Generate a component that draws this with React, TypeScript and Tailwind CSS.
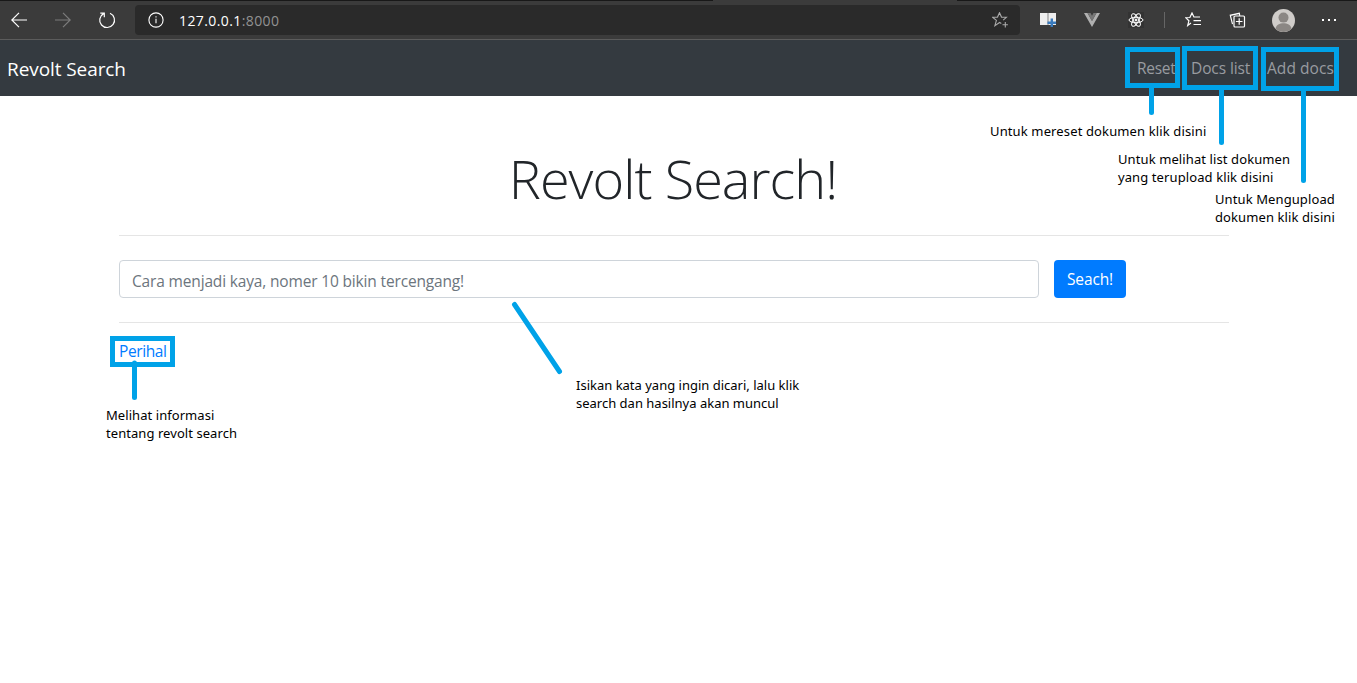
import React from "react";

const callouts = [
  { style: "left-[990px] top-[122px] tracking-[0.13px]", lines: ["Untuk mereset dokumen klik disini"] },
  { style: "left-[1118px] top-[150px] tracking-[0.1px]", lines: ["Untuk melihat list dokumen", "yang terupload klik disini"] },
  { style: "left-[1215px] top-[190px] tracking-[0.1px]", lines: ["Untuk Mengupload", "dokumen klik disini"] },
  { style: "left-[576px] top-[376px]", lines: ["Isikan kata yang ingin dicari, lalu klik", "search dan hasilnya akan muncul"] },
  { style: "left-[106px] top-[406px] tracking-[0.06px]", lines: ["Melihat informasi", "tentang revolt search"] },
];

function BrowserBar() {
  return (
    <div className="flex h-10 shrink-0 flex-col border-b border-[#5c5c5c] bg-[#3b3b3b] text-white">
      <div className="flex h-px shrink-0 justify-between">
        <div className="w-[713px] bg-[#181818]" />
        <div className="w-[400px] bg-[#181818]" />
      </div>
      <div className="flex flex-1 items-center">
        <svg className="ml-[11px] h-4 w-4 shrink-0" viewBox="0 0 16 16" fill="none" stroke="#fff" strokeWidth="1.2"><path d="M16 8H.8M8 .8.8 8 8 15.200" /></svg>
        <svg className="ml-7 h-4 w-4 shrink-0" viewBox="0 0 16 16" fill="none" stroke="#7c7c7c" strokeWidth="1.2"><path d="M0 8h15.200M8 .8 15.200 8 8 15.200" /></svg>
        <svg className="ml-[27px] h-[18px] w-[18px] shrink-0" viewBox="0 0 18 18" fill="none" stroke="#fff" strokeWidth="1.2"><path d="M12 2.300A7.400 7.400 0 1 1 5.600 2.600M6.300 6.200V2.200H2.300" /></svg>
        <div className="ml-[19px] flex h-[30px] w-[885px] shrink-0 items-center rounded bg-[#2a2a2a] pl-[13px]">
          <svg className="h-4 w-4 shrink-0" viewBox="0 0 16 16" fill="none" stroke="#fff" strokeWidth="1.100"><circle cx="8" cy="8" r="7.100" /><path d="M8 6.800v4.500M8 4.200v1.300" /></svg>
          <span className="ml-[15px] w-[813px] shrink-0 text-[14px] tracking-[0.4px] text-[#929292]"><span className="text-white">127.0.0.1</span>:8000</span>
          <svg className="h-4 w-4 shrink-0" viewBox="0 0 16 16" fill="none" stroke="#a9a9a9" strokeWidth="1.100"><path d="m9.300 11.500-1.700-1-4.700 3.200 1.500-5.300L.6 5.300l4.900-.2L7.500.7l2 4.400 4.900.2-3.200 2.800M13.300 10v5.600M10.500 12.800h5.400" /></svg>
        </div>
        <svg className="ml-5 h-4 w-4 shrink-0" viewBox="0 0 16 16"><path d="M0 1h7.700v12H0zM8.300 1H16v12H8.300z" fill="#eee" /><path d="M8 1v12" stroke="#bbb" /><path d="M11.800 6.500v8.500M7.500 10.700H16" stroke="#397abc" strokeWidth="2.400" /></svg>
        <svg className="ml-7 h-[15px] w-4 shrink-0" viewBox="0 0 16 15"><path d="M0 0h3.500L8 8l4.500-8H16L8 14z" fill="#b0b0b0" /><path d="M3.500 0h3L8 2.800 9.500 0h3L8 8z" fill="#777" /></svg>
        <svg className="ml-7 h-4 w-4 shrink-0" viewBox="0 0 16 16" fill="none" stroke="#fff"><path d="M0 0h16v16H0z" stroke="none" fill="#333" /><ellipse cx="8" cy="8" rx="7" ry="2.700" /><ellipse cx="8" cy="8" rx="7" ry="2.700" transform="rotate(60 8 8)" /><ellipse cx="8" cy="8" rx="7" ry="2.700" transform="rotate(120 8 8)" /><circle cx="8" cy="8" r="1" fill="#fff" /></svg>
        <div className="ml-5 h-4 w-px bg-[#666]" />
        <svg className="ml-5 h-4 w-4 shrink-0" viewBox="0 0 16 16" fill="none" stroke="#fff" strokeWidth="1.200"><path d="m6 11-3.300 2.500 1.200-4.700L.7 5.700l4.200-.2L7 1l1.900 4H15M8.500 8.700H16M8.500 12.500H16" /></svg>
        <svg className="ml-7 h-4 w-[17px] shrink-0" viewBox="0 0 17 16" fill="none" stroke="#fff" strokeWidth="1.200"><rect x="5" y="4" width="10.500" height="11" rx="1" /><path d="M10.200 6.200v6.600M6.900 9.500h6.600M3.500 12.200 1.300 3.300l9-2 .5 2.500" /></svg>
        <svg className="ml-[26px] h-[23px] w-[23px] shrink-0" viewBox="0 0 23 23"><circle cx="11.500" cy="11.500" r="11.500" fill="#cfccc9" /><circle cx="11.500" cy="8.600" r="5" fill="#8b8784" /><path d="M3.500 19.700c1-7.200 15-7.200 16 0-4.400 4.400-11.600 4.400-16 0Z" fill="#8b8784" /></svg>
        <div className="ml-[27px] flex gap-1"><i className="h-0.5 w-0.5 bg-white" /><i className="h-0.5 w-0.5 bg-white" /><i className="h-0.5 w-0.5 bg-white" /></div>
      </div>
    </div>
  );
}

export default function App() {
  return (
    <div className="relative flex h-[683px] w-[1357px] flex-col overflow-hidden bg-white font-['Open_Sans','Noto_Sans',sans-serif] text-[#212529]">
      <BrowserBar />
      <nav className="flex h-14 shrink-0 items-center bg-[#343a40] pt-0.5 pl-[7px] text-[15.500px] whitespace-nowrap text-[#999ca0]">
        <a className="w-[1130px] text-[19px] tracking-[-0.080px] text-white">Revolt Search</a>
        <a className="w-[54px] tracking-[-0.300px]">Reset</a>
        <a className="w-[76px] tracking-[-0.100px]">Docs list</a>
        <a className="tracking-[0.050px]">Add docs</a>
      </nav>
      <main className="ml-[119px] w-[1110px]">
        <h1 className="mt-[50px] flex h-[65px] items-center justify-center pr-0.5 text-[54px] font-light tracking-[-0.950px] whitespace-nowrap">Revolt Search!</h1>
        <hr className="mt-6 border-t border-[#e5e5e5]" />
        <form className="mt-6 flex gap-[15px]" onSubmit={(e) => e.preventDefault()}>
          <input className="h-[38px] w-[920px] rounded border border-[#ced4da] px-3 pt-[3px] text-[15.500px] tracking-[-0.160px] placeholder:text-[#6c757d]" placeholder="Cara menjadi kaya, nomer 10 bikin tercengang!" />
          <button className="h-[38px] w-[72px] rounded bg-[#007bff] pt-0.5 text-[15.500px] tracking-[-0.150px] text-white">Seach!</button>
        </form>
        <hr className="mt-6 border-t border-[#e5e5e5]" />
        <a className="mt-4 block text-[15.500px] leading-6 tracking-[-0.400px] text-[#007bff]">Perihal</a>
      </main>
      <svg className="absolute inset-0 h-full w-full" viewBox="0 0 1357 683" fill="none" stroke="#00a2e8" strokeWidth="5">
        <path d="M1127.500 49.500h50v36h-50zM1184.500 48.500h71v39h-71zM1263.500 49.500h73v39h-73zM112.500 338.500h60v26h-60z" />
        <path d="M1151.500 88v24.500M1221.500 90v52.500M1303.500 91v89.500M134.500 363v34.500M514.500 304.500l45 67" strokeLinecap="round" />
      </svg>
      {callouts.map((c) => (
        <p key={c.lines[0]} className={`absolute ${c.style} font-['Noto_Sans',sans-serif] text-[13px] leading-[18px] whitespace-nowrap text-black`}>
          {c.lines.map((line) => <span key={line} className="block">{line}</span>)}
        </p>
      ))}
    </div>
  );
}
